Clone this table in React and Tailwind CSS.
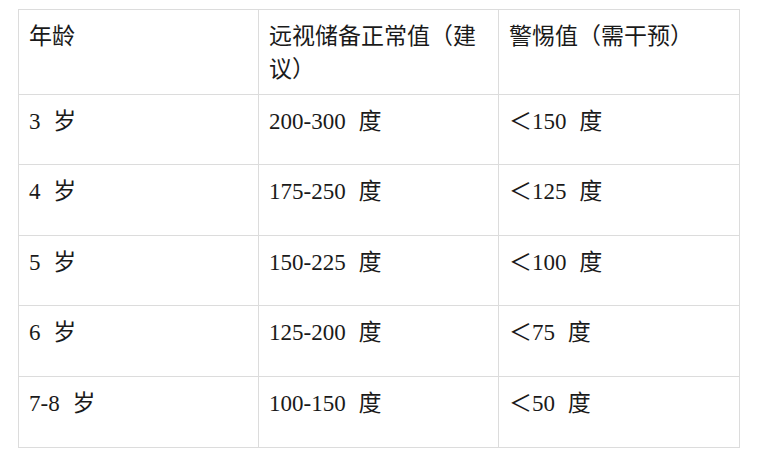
const ROWS = [
  { age: '3 岁', normal: '200-300 度', alert: '＜150 度', h: 'h-[70px]' },
  { age: '4 岁', normal: '175-250 度', alert: '＜125 度', h: 'h-[71px]' },
  { age: '5 岁', normal: '150-225 度', alert: '＜100 度', h: 'h-[70px]' },
  { age: '6 岁', normal: '125-200 度', alert: '＜75 度', h: 'h-[71px]' },
  { age: '7-8 岁', normal: '100-150 度', alert: '＜50 度', h: 'h-[71px]' },
];

const cell = 'border border-[#dcdcdc] align-top pl-[10px] pr-[12px] pt-[10px] text-left font-normal';

export default function App() {
  return (
    <div
      className="w-[759px] h-[457px] bg-white pl-[18px] pt-[9px] text-[23px] leading-[33px] text-[#1a1a1a] [word-spacing:7px]"
      style={{ fontFamily: '"Liberation Serif", "Noto Sans CJK SC", serif' }}
    >
      <table className="w-[721px] table-fixed border-collapse">
        <colgroup>
          <col className="w-[240px]" />
          <col className="w-[240px]" />
          <col className="w-[241px]" />
        </colgroup>
        <thead>
          <tr className="h-[85px]">
            <th className={cell}>年龄</th>
            <th className={cell}>远视储备正常值（建议）</th>
            <th className={cell}>警惕值（需干预）</th>
          </tr>
        </thead>
        <tbody>
          {ROWS.map((r) => (
            <tr key={r.age} className={r.h}>
              <td className={cell}>{r.age}</td>
              <td className={cell}>{r.normal}</td>
              <td className={cell}>{r.alert}</td>
            </tr>
          ))}
        </tbody>
      </table>
    </div>
  );
}
